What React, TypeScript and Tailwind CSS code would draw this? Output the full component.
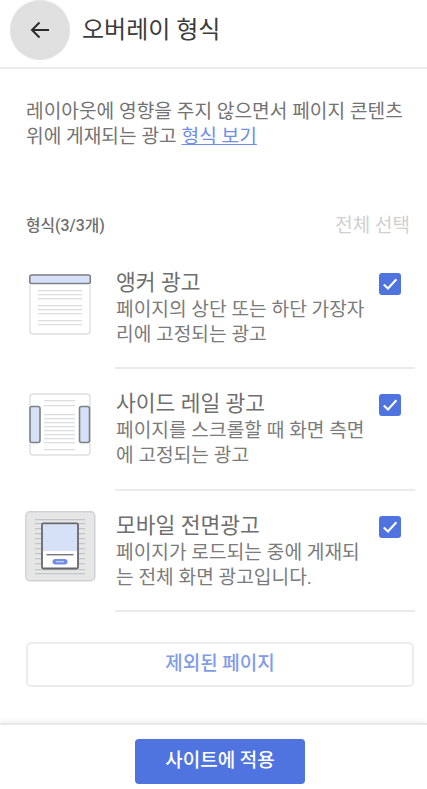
import React from 'react';

const FONT = "font-['Roboto','Noto_Sans_CJK_KR',sans-serif]";

function TextLines({ x, width, ys, color = '#dcdde0' }: { x: number; width: number; ys: number[]; color?: string }) {
    return (
        <>
            {ys.map((y) => (
                <rect key={y} x={x} y={y} width={width} height="1.3" fill={color} />
            ))}
        </>
    );
}

function AnchorIcon() {
    return (
        <svg width="64" height="62" viewBox="0 0 64 62" fill="none">
            <rect x="1" y="1" width="60" height="59" rx="3" fill="#fff" stroke="#dfe0e3" strokeWidth="1.4" />
            <TextLines x={9} width={44} ys={[16, 20, 24, 31, 35, 39, 46, 50]} />
            <rect x="0.8" y="1" width="60.5" height="8.5" rx="2" fill="#d6e1f8" stroke="#7d8087" strokeWidth="1.6" />
        </svg>
    );
}

function RailIcon() {
    return (
        <svg width="64" height="64" viewBox="0 0 64 64" fill="none">
            <rect x="1" y="1" width="60" height="61" rx="3" fill="#fff" stroke="#dfe0e3" strokeWidth="1.4" />
            <TextLines x={15} width={31} ys={[7, 12, 21, 25, 29, 33, 37, 41, 45, 49, 56]} />
            <rect x="1" y="13.5" width="10" height="36" rx="2" fill="#d6e1f8" stroke="#7d8087" strokeWidth="1.6" />
            <rect x="50.5" y="13.5" width="10" height="36" rx="2" fill="#d6e1f8" stroke="#7d8087" strokeWidth="1.6" />
        </svg>
    );
}

function InterstitialIcon() {
    return (
        <svg width="71" height="71" viewBox="0 0 71 71" fill="none">
            <rect x="0.8" y="0.8" width="69" height="69" rx="4" fill="#e6e6e7" stroke="#d0d1d3" strokeWidth="1.4" />
            <TextLines x={10} width={50} ys={[8, 12, 58, 62]} color="#c4c5c8" />
            <TextLines x={10} width={50} ys={[17, 22, 27, 32, 37, 42, 47, 52]} color="#c4c5c8" />
            <rect x="17" y="12.5" width="36" height="45" rx="1.5" fill="#fff" stroke="#65676c" strokeWidth="1.8" />
            <rect x="18" y="13.5" width="34" height="26.5" fill="#d6e1f8" />
            <rect x="21.5" y="43" width="27" height="1.4" fill="#76787d" />
            <rect x="27.5" y="48" width="15" height="5.5" rx="2.75" fill="#6f8ee6" />
            <rect x="31" y="50.2" width="8" height="1" fill="#d6e1f8" />
        </svg>
    );
}

function CheckBox() {
    return (
        <div className="w-[22px] h-[22px] shrink-0 rounded-[3px] bg-[#4f74e0] flex items-center justify-center">
            <svg width="18" height="18" viewBox="0 0 18 18" fill="none">
                <path d="M2.8 9.4 L7 13.4 L15.4 4.2" stroke="#fff" strokeWidth="2.1" />
            </svg>
        </div>
    );
}

const formats = [
    { id: 1, title: '앵커 광고', lines: ['페이지의 상단 또는 하단 가장자', '리에 고정되는 광고'], icon: <AnchorIcon />, iconPad: 'pt-[26px]' },
    { id: 2, title: '사이드 레일 광고', lines: ['페이지를 스크롤할 때 화면 측면', '에 고정되는 광고'], icon: <RailIcon />, iconPad: 'pt-[24px]' },
    { id: 3, title: '모바일 전면광고', lines: ['페이지가 로드되는 중에 게재되', '는 전체 화면 광고입니다.'], icon: <InterstitialIcon />, iconPad: 'pt-[20px]' },
];

export default function App() {
    return (
        <div className={`${FONT} w-[427px] h-[789px] overflow-hidden bg-white flex flex-col`}>
            <header className="h-[69px] shrink-0 border-b-2 border-[#ebebeb] flex items-start">
                <div className="w-[60px] h-[60px] ml-[10px] rounded-full bg-[#e0e0e0] flex items-center justify-center">
                    <svg width="24" height="24" viewBox="0 0 24 24" fill="none">
                        <path d="M21 12H4.5M11.5 4.5L4 12l7.5 7.5" stroke="#2b2b2b" strokeWidth="2" />
                    </svg>
                </div>
                <h1 className="ml-[12px] mt-[15px] text-[24px] leading-[30px] text-[#3c3c3c] font-normal">오버레이 형식</h1>
            </header>

            <p className="mx-[26px] mt-[30px] text-[19.2px] leading-[25px] text-[#737373] whitespace-nowrap">
                레이아웃에 영향을 주지 않으면서 페이지 콘텐츠
                <br />
                위에 게재되는 광고 <a className="text-[#6f8ee6] underline">형식 보기</a>
            </p>

            <div className="ml-[26px] mr-[17px] mt-[64px] h-[26px] flex items-center justify-between">
                <span className="text-[15.8px] font-medium text-[#6e6e6e]">형식(3/3개)</span>
                <span className="text-[19px] text-[#cfcfcf]">전체 선택</span>
            </div>

            <ul className="mt-[9px]">
                {formats.map((f) => (
                    <li key={f.id} className="flex h-[122px] last:h-[121px] first:h-[121px]">
                        <div className={`w-[115px] shrink-0 flex justify-center pl-[6px] ${f.iconPad}`}>{f.icon}</div>
                        <div className="w-[300px] border-b-2 border-[#ebebeb] flex justify-between pr-[14px]">
                            <div className="pl-[1px] pt-[21px]">
                                <div className="text-[21.5px] leading-[28px] text-[#6e6e6e]">{f.title}</div>
                                <div className="text-[19.2px] leading-[25px] text-[#7b7b7b] whitespace-nowrap">
                                    {f.lines[0]}
                                    <br />
                                    {f.lines[1]}
                                </div>
                            </div>
                            <div className="pt-[25px]">
                                <CheckBox />
                            </div>
                        </div>
                    </li>
                ))}
            </ul>

            <button className="ml-[26px] mr-[13px] mt-[30px] h-[45px] shrink-0 rounded-[5px] border-2 border-[#ececec] text-[19px] text-[#7f9be9] font-medium">
                제외된 페이지
            </button>

            <div className="mt-[36px] flex-1 border-t-2 border-[#e8e8e8] shadow-[0_-2px_4px_rgba(0,0,0,0.06)] pl-[135px] pt-[14px]">
                <button className="w-[170px] h-[45px] rounded-[4px] bg-[#4f74e0] text-white text-[19px] font-medium">
                    사이트에 적용
                </button>
            </div>
        </div>
    );
}
